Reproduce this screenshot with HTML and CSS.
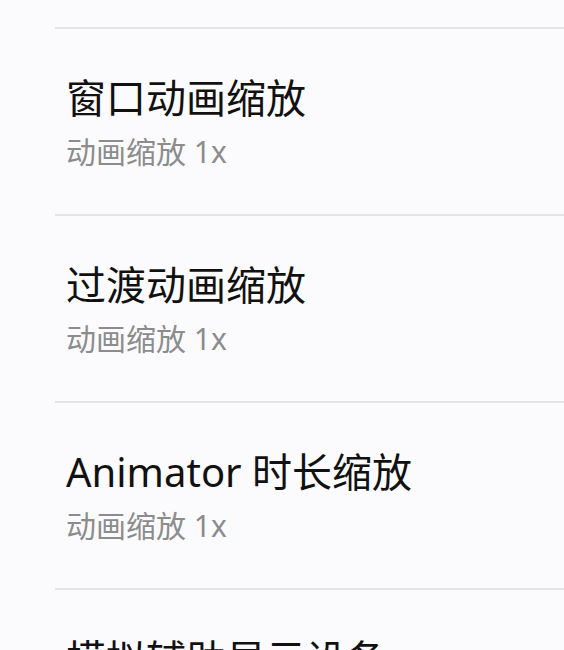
FILE: index.html
```html
<!DOCTYPE html>
<html lang="zh-CN">
<head>
    <meta charset="UTF-8">
    <meta name="viewport" content="width=device-width, initial-scale=1.0">
    <title>开发者选项</title>
    <link rel="stylesheet" href="styles.css">
</head>
<body>

    <div class="list">
        <div class="item">
            <div class="item-title">窗口动画缩放</div>
            <div class="item-sub">动画缩放 1x</div>
        </div>
        <div class="item">
            <div class="item-title">过渡动画缩放</div>
            <div class="item-sub">动画缩放 1x</div>
        </div>
        <div class="item">
            <div class="item-title">Animator 时长缩放</div>
            <div class="item-sub">动画缩放 1x</div>
        </div>
        <div class="item item-last">
            <div class="item-title">模拟辅助显示设备</div>
        </div>
    </div>

</body>
</html>
```

FILE: styles.css
```css
body {
    margin: 0;
    background-color: #fbfbfd;
    font-family: "Noto Sans", "Noto Sans CJK SC", sans-serif;
    overflow: hidden;
    height: 650px;
}
.list {
    margin-top: 27px;
    padding-left: 55px;
}
.item {
    border-top: 2px solid #e4e4e7;
    padding: 43px 0 42px 11px;
}
.item-title {
    font-size: 40px;
    line-height: 52px;
    color: #111;
}
.item-sub {
    margin-top: 8px;
    font-size: 30px;
    line-height: 40px;
    color: #8c8c8c;
}
```
